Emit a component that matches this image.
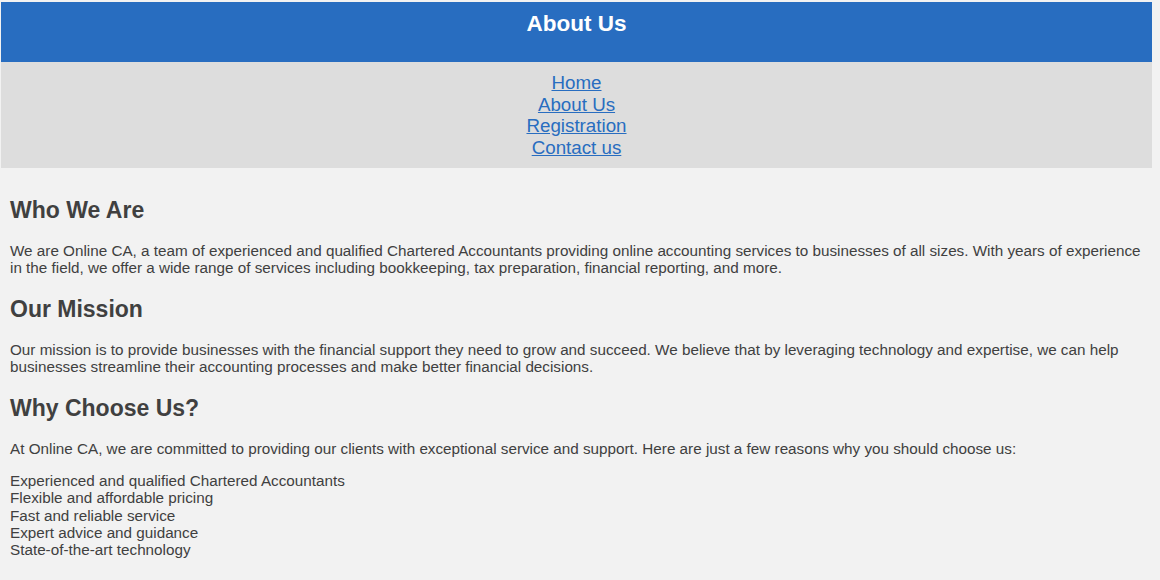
export default function App() {
  const reasons = [
    'Experienced and qualified Chartered Accountants',
    'Flexible and affordable pricing',
    'Fast and reliable service',
    'Expert advice and guidance',
    'State-of-the-art technology',
  ]
  const links = ['Home', 'About Us', 'Registration', 'Contact us']

  return (
    <div className="min-h-[580px] bg-[#f2f2f2] pt-[2px] pl-[1px] pr-[8px] font-['Liberation_Sans',Arial,sans-serif] text-[#404040]">
      <header className="h-[60px] bg-[#286dc0] pt-[9px] text-center">
        <h1 className="text-[22.5px] font-bold leading-[26px] text-white">About Us</h1>
      </header>
      <nav className="bg-[#dddddd] py-[10px] text-center text-[18.75px] leading-[1.15]">
        {links.map((l) => (
          <div key={l}>
            <a href="#" className="text-[#286dc0] underline">{l}</a>
          </div>
        ))}
      </nav>
      <main className="px-[9px] pt-[10px] text-[15.25px] leading-[17.25px]">
        <h2 className="mt-[19px] mb-[18.5px] text-[23px] font-bold leading-[26px]">Who We Are</h2>
        <p>
          We are Online CA, a team of experienced and qualified Chartered Accountants providing online accounting services to businesses of all sizes. With years of experience in the field, we offer a wide range of services including bookkeeping, tax preparation, financial reporting, and more.
        </p>
        <h2 className="mt-[20px] mb-[18.5px] text-[23px] font-bold leading-[26px]">Our Mission</h2>
        <p>
          Our mission is to provide businesses with the financial support they need to grow and succeed. We believe that by leveraging technology and expertise, we can help businesses streamline their accounting processes and make better financial decisions.
        </p>
        <h2 className="mt-[20px] mb-[18.5px] text-[23px] font-bold leading-[26px]">Why Choose Us?</h2>
        <p>
          At Online CA, we are committed to providing our clients with exceptional service and support. Here are just a few reasons why you should choose us:
        </p>
        <ul className="mt-[15px]">
          {reasons.map((r) => (
            <li key={r}>{r}</li>
          ))}
        </ul>
      </main>
    </div>
  )
}
